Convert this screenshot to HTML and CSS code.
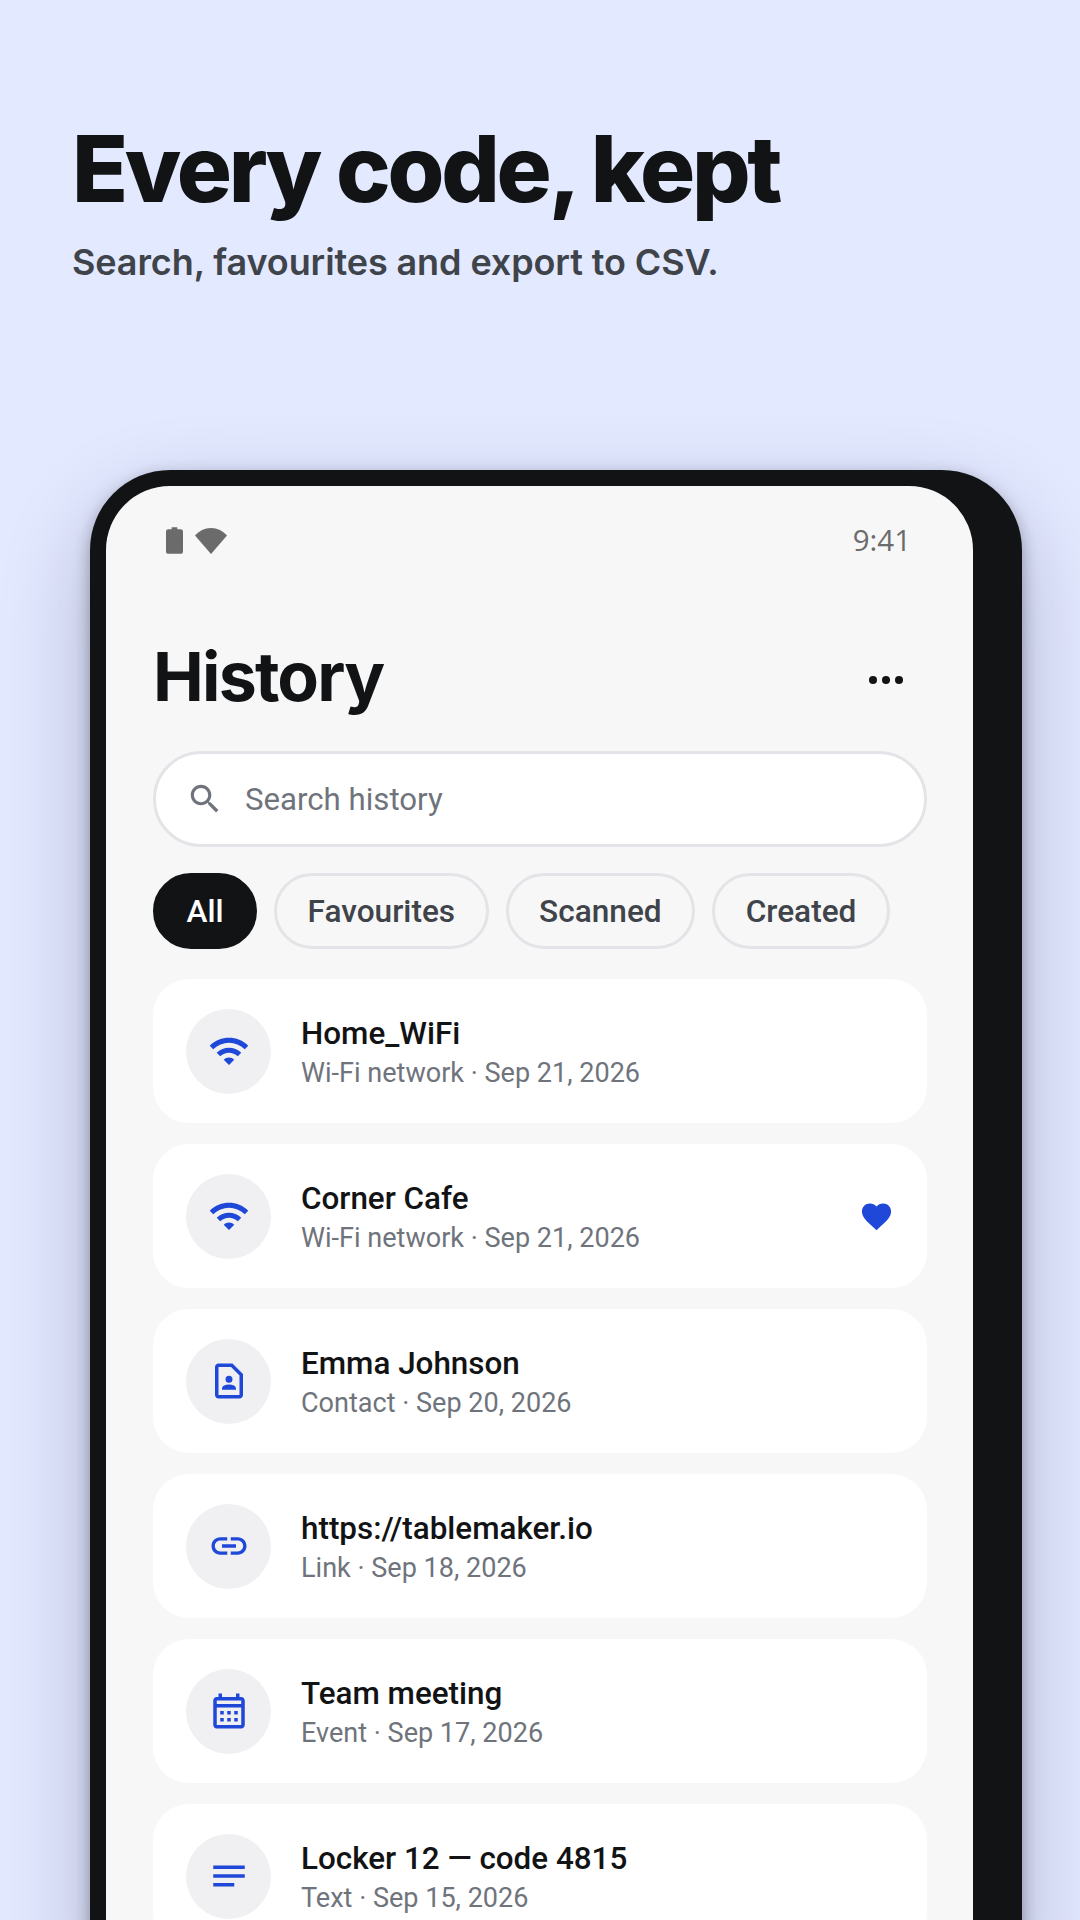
FILE: index.html
```html
<!DOCTYPE html>
<html>
<head>
    <meta charset="UTF-8">
    <title>Every code, kept</title>
    <link rel="stylesheet" href="styles.css">
</head>
<body>
    <header class="hero">
        <h1>Every code, kept</h1>
        <p>Search, favourites and export to CSV.</p>
    </header>

    <div class="phone">
        <main class="screen">
            <div class="status">
                <div class="status-icons">
                    <svg class="battery" viewBox="0 0 18 28"><path d="M6 0h6v2h3.500A2.500 2.500 0 0 1 18 4.500V26a2 2 0 0 1-2 2H2a2 2 0 0 1-2-2V4.500A2.500 2.500 0 0 1 2.500 2H6z"/></svg>
                    <svg class="signal" viewBox="0 0 32 26"><path d="M16 26 0 7.500C4 3 9.500 0 16 0s12 3 16 7.500z"/></svg>
                </div>
                <span class="time">9:41</span>
            </div>

            <div class="title-row">
                <h2>History</h2>
                <svg class="more" viewBox="0 0 34 10"><circle cx="4" cy="5" r="4"/><circle cx="17" cy="5" r="4"/><circle cx="30" cy="5" r="4"/></svg>
            </div>

            <div class="search">
                <svg viewBox="0 0 24 24"><path d="M15.500 14h-.79l-.28-.27C15.410 12.590 16 11.110 16 9.500 16 5.910 13.090 3 9.500 3S3 5.910 3 9.500 5.910 16 9.500 16c1.610 0 3.090-.59 4.230-1.570l.27.28v.79l5 4.990L20.490 19l-4.990-5zm-6 0C7.010 14 5 11.990 5 9.500S7.010 5 9.500 5 14 7.010 14 9.500 11.990 14 9.500 14z"/></svg>
                <span>Search history</span>
            </div>

            <div class="chips">
                <span class="chip active">All</span>
                <span class="chip">Favourites</span>
                <span class="chip">Scanned</span>
                <span class="chip">Created</span>
            </div>

            <ul class="list">
                <li class="item">
                    <div class="item-icon"><svg viewBox="0 0 24 24"><path d="M1 9l2 2c4.970-4.970 13.030-4.970 18 0l2-2C16.930 2.930 7.080 2.930 1 9zm8 8l3 3 3-3c-1.650-1.660-4.340-1.660-6 0zm-4-4l2 2c2.760-2.760 7.240-2.760 10 0l2-2C15.140 9.140 8.870 9.140 5 13z"/></svg></div>
                    <div class="item-text">
                        <div class="item-title">Home_WiFi</div>
                        <div class="item-sub">Wi-Fi network · Sep 21, 2026</div>
                    </div>
                </li>
                <li class="item">
                    <div class="item-icon"><svg viewBox="0 0 24 24"><path d="M1 9l2 2c4.970-4.970 13.030-4.970 18 0l2-2C16.930 2.930 7.080 2.930 1 9zm8 8l3 3 3-3c-1.650-1.660-4.340-1.660-6 0zm-4-4l2 2c2.760-2.760 7.240-2.760 10 0l2-2C15.140 9.140 8.870 9.140 5 13z"/></svg></div>
                    <div class="item-text">
                        <div class="item-title">Corner Cafe</div>
                        <div class="item-sub">Wi-Fi network · Sep 21, 2026</div>
                    </div>
                    <svg class="heart" viewBox="0 0 24 24"><path d="M12 21.350l-1.450-1.320C5.400 15.360 2 12.280 2 8.500 2 5.420 4.420 3 7.500 3c1.740 0 3.410.81 4.500 2.090C13.090 3.810 14.760 3 16.500 3 19.580 3 22 5.420 22 8.500c0 3.780-3.400 6.860-8.550 11.540L12 21.350z"/></svg>
                </li>
                <li class="item">
                    <div class="item-icon"><svg viewBox="0 0 24 24"><path d="M14 2H6c-1.100 0-2 .9-2 2v16c0 1.100.9 2 2 2h12c1.100 0 2-.9 2-2V8l-6-6zm4 18H6V4h7.170L18 8.830V20zm-6-7a2 2 0 1 0 0-4 2 2 0 0 0 0 4zm4 3.430c0-.81-.48-1.530-1.220-1.850-.85-.37-1.790-.58-2.780-.58s-1.930.21-2.780.58C8.480 14.900 8 15.620 8 16.430V17h8v-.57z"/></svg></div>
                    <div class="item-text">
                        <div class="item-title">Emma Johnson</div>
                        <div class="item-sub">Contact · Sep 20, 2026</div>
                    </div>
                </li>
                <li class="item">
                    <div class="item-icon"><svg viewBox="0 0 24 24"><path d="M3.900 12c0-1.710 1.390-3.100 3.100-3.100h4V7H7c-2.760 0-5 2.240-5 5s2.240 5 5 5h4v-1.900H7c-1.710 0-3.100-1.390-3.100-3.100zM8 13h8v-2H8v2zm9-6h-4v1.900h4c1.710 0 3.100 1.390 3.100 3.100s-1.390 3.100-3.100 3.100h-4V17h4c2.760 0 5-2.240 5-5s-2.240-5-5-5z"/></svg></div>
                    <div class="item-text">
                        <div class="item-title">https://tablemaker.io</div>
                        <div class="item-sub">Link · Sep 18, 2026</div>
                    </div>
                </li>
                <li class="item">
                    <div class="item-icon"><svg viewBox="0 0 24 24"><path d="M19 4h-1V2h-2v2H8V2H6v2H5c-1.110 0-1.990.9-1.990 2L3 20c0 1.100.89 2 2 2h14c1.100 0 2-.9 2-2V6c0-1.100-.9-2-2-2zm0 16H5V10h14v10zm0-12H5V6h14v2zM9 14H7v-2h2v2zm4 0h-2v-2h2v2zm4 0h-2v-2h2v2zm-8 4H7v-2h2v2zm4 0h-2v-2h2v2zm4 0h-2v-2h2v2z"/></svg></div>
                    <div class="item-text">
                        <div class="item-title">Team meeting</div>
                        <div class="item-sub">Event · Sep 17, 2026</div>
                    </div>
                </li>
                <li class="item">
                    <div class="item-icon"><svg viewBox="0 0 24 24"><path d="M3 18h12v-2H3v2zM3 6v2h18V6H3zm0 7h18v-2H3v2z"/></svg></div>
                    <div class="item-text">
                        <div class="item-title">Locker 12 — code 4815</div>
                        <div class="item-sub">Text · Sep 15, 2026</div>
                    </div>
                </li>
            </ul>
        </main>
    </div>
</body>
</html>
```

FILE: styles.css
```css
* {
    box-sizing: border-box;
}

html, body {
    height: 1920px;
    margin: 0;
    overflow: hidden;
}

body {
    background-color: #e3e9ff;
    font-family: Roboto, Arial, sans-serif;
    color: #111315;
}

h1, h2, p, ul {
    margin: 0;
    padding: 0;
}

.hero {
    height: 470px;
    padding: 117px 0 0 72px;
}

.hero h1 {
    font-family: Inter, sans-serif;
    font-size: 92px;
    font-weight: 800;
    line-height: 104px;
    letter-spacing: -3.25px;
}

.hero p {
    margin-top: 17px;
    font-family: Inter, sans-serif;
    font-size: 36px;
    font-weight: 600;
    line-height: 48px;
    letter-spacing: -0.1px;
    color: #3f434a;
}

.phone {
    width: 932px;
    height: 1500px;
    margin-left: 90px;
    padding: 16px 49px 0 16px;
    background-color: #111315;
    border-radius: 80px 80px 0 0;
    box-shadow: 0 36px 90px rgba(15, 18, 50, 0.24), 0 6px 16px rgba(15, 18, 40, 0.34);
}

.screen {
    height: 100%;
    padding: 0 46px 0 47px;
    background-color: #f7f7f7;
    border-radius: 64px 64px 0 0;
}

.status {
    display: flex;
    align-items: flex-start;
    justify-content: space-between;
    height: 145px;
    padding: 39px 16px 0 13px;
}

.status-icons {
    display: flex;
    align-items: center;
    gap: 12px;
    margin-top: 2px;
}

.status-icons svg {
    display: block;
    fill: #6b6b6b;
}

.battery {
    width: 17px;
    height: 27px;
}

.signal {
    width: 32px;
    height: 26px;
}

.time {
    font-family: "Open Sans", sans-serif;
    font-size: 29.5px;
    line-height: 30px;
    color: #6b6b6b;
}

.title-row {
    display: flex;
    align-items: center;
    justify-content: space-between;
    height: 90px;
    padding-right: 24px;
}

.title-row h2 {
    font-family: Inter, sans-serif;
    font-size: 68px;
    font-weight: 700;
    letter-spacing: -1.8px;
}

.more {
    width: 34px;
    height: 10px;
    margin-top: 8px;
    fill: #111315;
}

.search {
    display: flex;
    align-items: center;
    gap: 21px;
    height: 96px;
    margin-top: 30px;
    padding-left: 30px;
    background-color: #fff;
    border: 3px solid #e4e4e8;
    border-radius: 48px;
    font-size: 31.2px;
    color: #6f747c;
}

.search svg {
    width: 38px;
    height: 38px;
    fill: #6f747c;
}

.chips {
    display: flex;
    gap: 17px;
    margin-top: 26px;
}

.chip {
    display: flex;
    align-items: center;
    height: 76px;
    padding: 0 30.5px;
    border: 3px solid #e4e4e8;
    border-radius: 38px;
    font-size: 31.6px;
    font-weight: 500;
    color: #3f434a;
}

.chip.active {
    background-color: #111315;
    border-color: #111315;
    color: #fff;
}

.list {
    display: flex;
    flex-direction: column;
    gap: 21px;
    margin-top: 30px;
    list-style: none;
}

.item {
    display: flex;
    align-items: center;
    height: 144px;
    padding: 0 33px;
    background-color: #fff;
    border-radius: 36px;
}

.item-icon {
    display: flex;
    align-items: center;
    justify-content: center;
    flex: none;
    width: 85px;
    height: 85px;
    background-color: #f0f0f3;
    border-radius: 50%;
}

.item-icon svg {
    width: 42px;
    height: 42px;
    fill: #1f47d8;
}

.item-text {
    flex: 1;
    margin-left: 30px;
    padding-top: 2px;
}

.item-title {
    font-size: 31.4px;
    font-weight: 500;
    line-height: 40px;
    color: #111315;
}

.item-sub {
    margin-top: 1px;
    font-size: 27.05px;
    line-height: 36px;
    color: #6f747c;
}

.heart {
    width: 35px;
    height: 35px;
    fill: #1f47d8;
}
```
